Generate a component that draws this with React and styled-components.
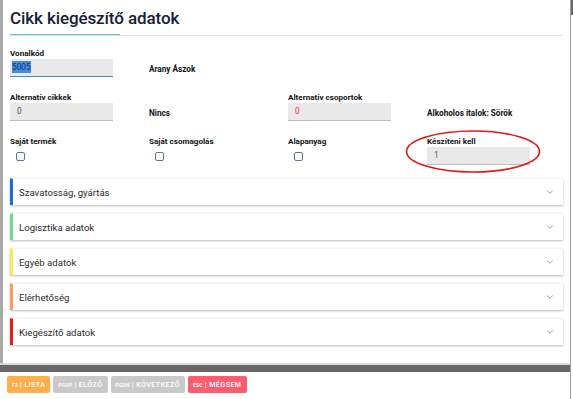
import React from 'react';
import styled, { createGlobalStyle } from 'styled-components';
import { ChevronDown } from 'lucide-react';

const GlobalStyle = createGlobalStyle`
  html, body { margin: 0; padding: 0; background: #fff; }
  body { font-family: Roboto, "Liberation Sans", Arial, sans-serif; }
`;

const sections = [
    { title: 'Szavatosság, gyártás', color: '#1f6fd8' },
    { title: 'Logisztika adatok', color: '#72db92' },
    { title: 'Egyéb adatok', color: '#f6ec55' },
    { title: 'Elérhetőség', color: '#ff9a5c' },
    { title: 'Kiegészítő adatok', color: '#ee1a1a' },
];

const buttons = [
    { key: 'F3', label: 'LISTA', bg: '#ffad4d' },
    { key: 'PGUP', label: 'ELŐZŐ', bg: '#c9c9c9' },
    { key: 'PGDN', label: 'KÖVETKEZŐ', bg: '#c9c9c9' },
    { key: 'ESC', label: 'MÉGSEM', bg: '#ff5c70' },
];

const App = () => {
    return (
        <Screen>
            <GlobalStyle />
            <Main>
                <Window>
                    <Title>Cikk kiegészítő adatok</Title>
                    <TitleRule />
                    <Fields>
                        <Field>
                            <Label>Vonalkód</Label>
                            <Input focused><Selected>5005</Selected></Input>
                        </Field>
                        <Field>
                            <Value>Arany Ászok</Value>
                        </Field>
                        <Field />
                        <Field />

                        <Field>
                            <Label>Alternatív cikkek</Label>
                            <Input>0</Input>
                        </Field>
                        <Field>
                            <Value>Nincs</Value>
                        </Field>
                        <Field>
                            <Label>Alternatív csoportok</Label>
                            <Input red>0</Input>
                        </Field>
                        <Field>
                            <Value>Alkoholos italok: Sörök</Value>
                        </Field>

                        <Field>
                            <Label>Saját termék</Label>
                            <Checkbox />
                        </Field>
                        <Field>
                            <Label>Saját csomagolás</Label>
                            <Checkbox />
                        </Field>
                        <Field>
                            <Label>Alapanyag</Label>
                            <Checkbox />
                        </Field>
                        <Field>
                            <Label>Készíteni kell</Label>
                            <Input>1</Input>
                            <Ellipse width="138" height="44" viewBox="0 0 138 44">
                                <ellipse cx="68" cy="21.5" rx="66.5" ry="20.5" fill="none" stroke="#e41515" strokeWidth="1.6" />
                            </Ellipse>
                        </Field>
                    </Fields>
                    <Sections>
                        {sections.map(s => (
                            <Section key={s.title} accent={s.color}>
                                <SectionTitle>{s.title}</SectionTitle>
                                <ChevronDown size={10} color="#8a8a8a" strokeWidth={2} />
                            </Section>
                        ))}
                    </Sections>
                </Window>
                <Divider />
                <Footer>
                    {buttons.map(b => (
                        <KeyButton key={b.key} bg={b.bg}>
                            <KeyName>{b.key}</KeyName>
                            <span>| {b.label}</span>
                        </KeyButton>
                    ))}
                </Footer>
            </Main>
            <Scrollbar><Thumb /></Scrollbar>
        </Screen>
    );
};

export default App;

const Screen = styled.div`
display: flex;
width: 573px;
height: 399px;
overflow: hidden;
`;

const Main = styled.div`
flex: 1;
display: flex;
flex-direction: column;
`;

const Window = styled.div`
height: 363px;
box-sizing: border-box;
border-left: 3px solid #a8a8a8;
padding: 0 0 0 7px;
display: flex;
flex-direction: column;
`;

const Title = styled.h1`
margin: 0;
padding-top: 5px;
font-size: 17px;
line-height: 26px;
font-weight: 500;
color: #152039;
letter-spacing: -0.1px;
`;

const TitleRule = styled.div`
margin-top: 3px;
margin-right: 7px;
height: 2px;
background: linear-gradient(to right, #56c6ea 0, #56c6ea 110px, transparent 110px);
border-bottom: 1px solid #e0e0e0;
box-sizing: border-box;
`;

const Fields = styled.div`
display: grid;
grid-template-columns: repeat(4, 139px);
row-gap: 15px;
margin-top: 12px;
`;

const Field = styled.div`
position: relative;
display: flex;
flex-direction: column;
`;

const Label = styled.div`
font-size: 8.1px;
font-weight: 700;
line-height: 11px;
color: #111;
`;

const Input = styled.div`
width: 103px;
height: 18px;
box-sizing: border-box;
background: #e9e9e9;
border-bottom: 1px solid ${p => (p.focused ? '#3b8fe0' : '#bdbdbd')};
font-size: 8.3px;
line-height: 17px;
color: ${p => (p.red ? '#ff3030' : '#555')};
padding: 0 7px 0 ${p => (p.focused ? '2px' : '7px')};
`;

const Selected = styled.span`
background: #3f8ee6;
color: #173466;
padding: 1px 0;
`;

const Value = styled.div`
padding-top: 16px;
font-size: 8.2px;
font-weight: 700;
line-height: 11px;
color: #111;
`;

const Checkbox = styled.div`
width: 9px;
height: 9px;
box-sizing: border-box;
margin: 5px 0 0 6px;
border: 1.5px solid #57769a;
border-radius: 2px;
background: #fff;
`;

const Ellipse = styled.svg`
position: absolute;
left: -22px;
top: -6px;
pointer-events: none;
`;

const Sections = styled.div`
display: flex;
flex-direction: column;
gap: 8px;
margin-top: 13px;
margin-right: 7px;
`;

const Section = styled.div`
height: 27px;
box-sizing: border-box;
display: flex;
align-items: center;
justify-content: space-between;
padding: 0 8px 0 6px;
background: #fff;
border-left: 3px solid ${p => p.accent};
border-top: 1px solid #f4f4f4;
box-shadow: 0 1px 2px rgba(0, 0, 0, 0.28);
`;

const SectionTitle = styled.span`
font-size: 9.6px;
color: #2b2b2b;
`;

const Divider = styled.div`
height: 2px;
background: #d9d9d9;
border-bottom: 7px solid #686868;
`;

const Footer = styled.div`
flex: 1;
display: flex;
gap: 3px;
padding: 4px 0 0 7px;
align-items: flex-start;
`;

const KeyButton = styled.div`
display: flex;
align-items: center;
gap: 2px;
height: 17px;
padding: 0 5px;
border-radius: 2px;
background: ${p => p.bg};
color: #fff;
font-size: 7.2px;
font-weight: 500;
letter-spacing: 0.4px;
`;

const KeyName = styled.span`
font-size: 5px;
font-weight: 700;
letter-spacing: 0.2px;
`;

const Scrollbar = styled.div`
width: 3px;
background: #fff;
border-left: 1px solid #a0a0a0;
box-sizing: border-box;
`;

const Thumb = styled.div`
height: 15px;
background: #6a6a6a;
`;
